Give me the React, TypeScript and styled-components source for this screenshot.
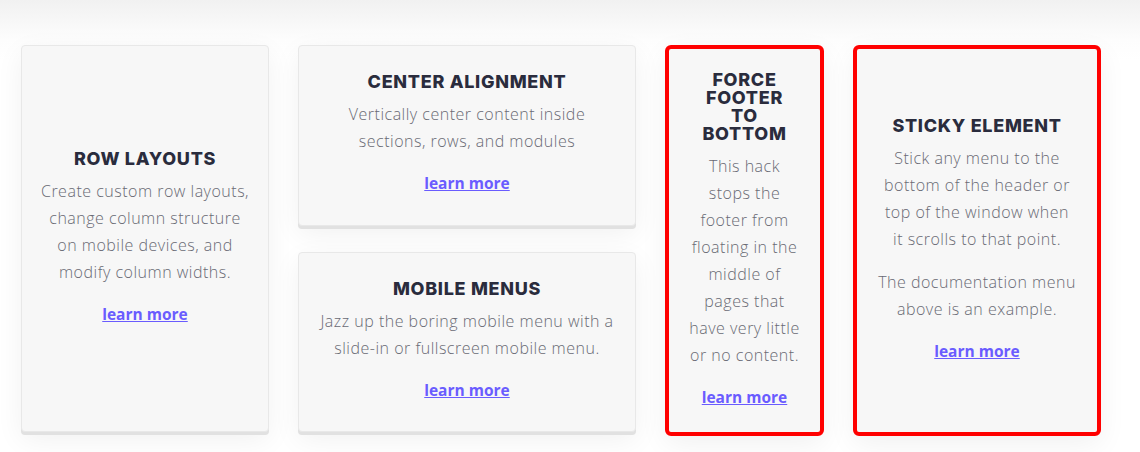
import React from 'react';
import styled, { createGlobalStyle } from 'styled-components';

const GlobalStyle = createGlobalStyle`
    html, body {
        margin: 0;
        padding: 0;
    }

    body {
        background: linear-gradient(to bottom, #f1f1f1 0px, #fdfdfd 40px, #ffffff 60px);
        min-height: 452px;
    }
`;

const Page = styled.div`
    padding: 45px 0 0 21px;
`;

const Grid = styled.div`
    display: grid;
    grid-template-columns: 248px 338px 159px 248px;
    column-gap: 29px;
    align-items: start;
`;

const Stack = styled.div`
    display: flex;
    flex-direction: column;
    gap: 26px;
    height: 387px;
`;

const Card = styled.div<{ $highlight?: boolean; $height?: string; $pad: number }>`
    box-sizing: border-box;
    display: flex;
    flex-direction: column;
    justify-content: center;
    align-items: center;
    text-align: center;
    padding: 0 ${p => p.$pad}px;
    height: ${p => p.$height || 'auto'};
    flex: ${p => (p.$height ? 'none' : '1')};
    background: #f7f7f7;
    border: ${p => (p.$highlight ? '4px solid #ff0000' : '1px solid #e8e8e8')};
    border-radius: ${p => (p.$highlight ? 6 : 4)}px;
    box-shadow: ${p =>
        p.$highlight
            ? '0 8px 28px rgba(0, 0, 0, 0.06)'
            : '0 3px 0 #e1e1e1, 0 8px 28px rgba(0, 0, 0, 0.06)'};
`;

const Title = styled.h3`
    margin: 0 0 10px;
    padding: 0 4px;
    font-family: Inter, "DejaVu Sans", sans-serif;
    font-weight: 800;
    font-size: 18px;
    line-height: 18px;
    letter-spacing: 0.7px;
    text-transform: uppercase;
    color: #2a2c3d;
`;

const Text = styled.p`
    margin: 0 0 16px;
    font-family: "Open Sans", "Liberation Sans", sans-serif;
    font-weight: 300;
    font-size: 16px;
    line-height: 27px;
    letter-spacing: 0.5px;
    color: #696a74;

    &:last-of-type {
        margin-bottom: 15px;
    }
`;

const More = styled.a`
    font-family: "Open Sans", "Liberation Sans", sans-serif;
    font-weight: 700;
    font-size: 15.5px;
    line-height: 27px;
    color: #6a5cff;
    text-decoration: underline;
    cursor: pointer;
`;

const Feature = ({ title, text, highlight, height, pad = 20 }:
    { title: string, text: string[], highlight?: boolean, height?: string, pad?: number }
    ) => (
    <Card $highlight={highlight} $height={height} $pad={pad}>
        <Title>{title}</Title>
        {text.map(t =>
            <Text key={t}>{t}</Text>
        )}
        <More href="#">learn more</More>
    </Card>
);

const App = () => (
    <>
        <GlobalStyle />
        <Page>
            <Grid>
                <Feature
                    height="387px"
                    pad={18}
                    title="Row Layouts"
                    text={['Create custom row layouts, change column structure on mobile devices, and modify column widths.']}
                />
                <Stack>
                    <Feature
                        title="Center Alignment"
                        text={['Vertically center content inside sections, rows, and modules']}
                    />
                    <Feature
                        title="Mobile Menus"
                        text={['Jazz up the boring mobile menu with a slide-in or fullscreen mobile menu.']}
                    />
                </Stack>
                <Feature
                    highlight
                    height="391px"
                    title="Force Footer to Bottom"
                    text={['This hack stops the footer from floating in the middle of pages that have very little or no content.']}
                />
                <Feature
                    highlight
                    height="391px"
                    pad={21}
                    title="Sticky Element"
                    text={[
                        'Stick any menu to the bottom of the header or top of the window when it scrolls to that point.',
                        'The documentation menu above is an example.',
                    ]}
                />
            </Grid>
        </Page>
    </>
);

export default App;
